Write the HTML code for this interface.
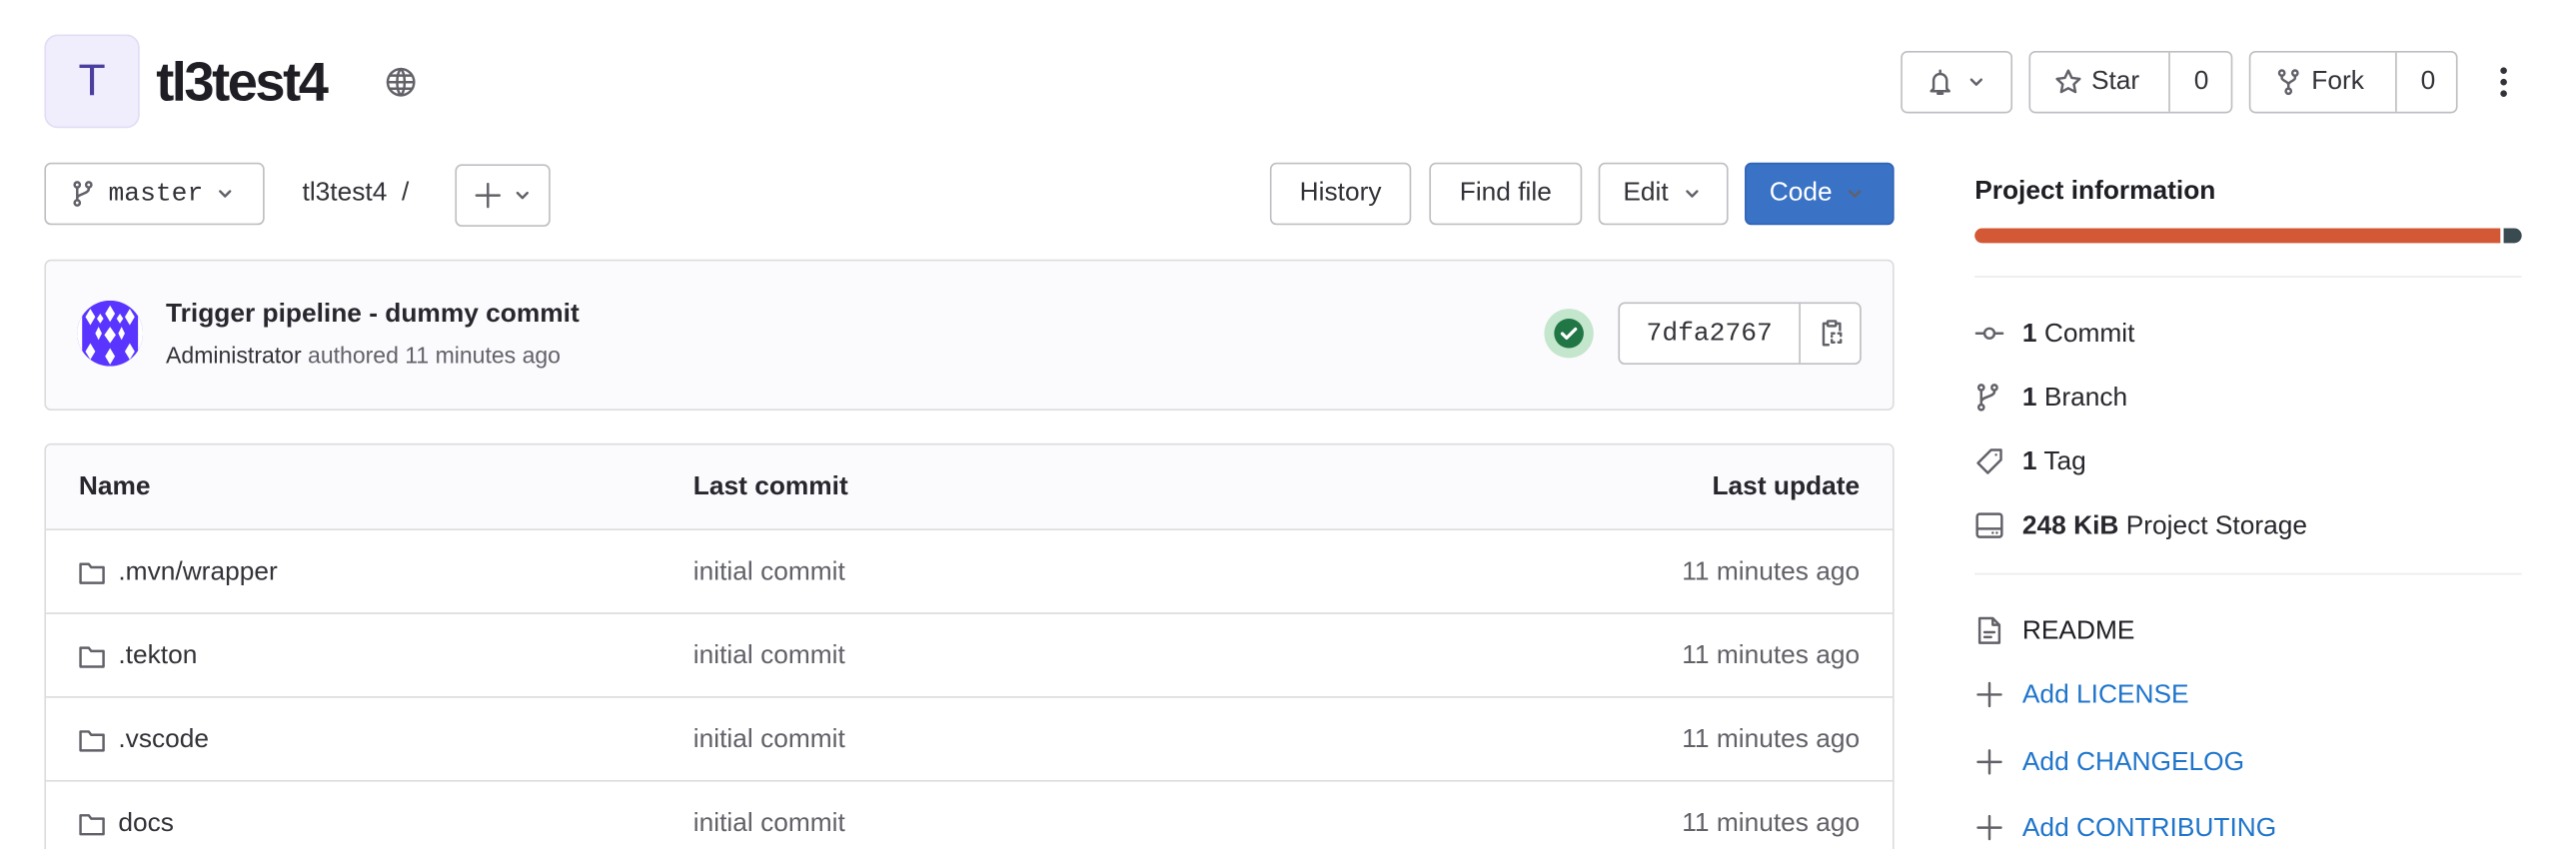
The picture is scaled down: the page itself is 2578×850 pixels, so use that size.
<!DOCTYPE html>
<html><head><meta charset="utf-8">
<style>
html,body{margin:0;padding:0;background:#fff;overflow:hidden;width:2578px;height:850px}
#w{position:absolute;left:0;top:0;width:1568px;height:517px;overflow:hidden;transform:scale(1.6441);transform-origin:0 0;font-family:"Liberation Sans",sans-serif;color:#28272d;font-size:16px}
.a{position:absolute}
.btn{position:absolute;box-sizing:border-box;border:1px solid #bfbfc3;border-radius:4px;background:#fff;height:38px;display:flex;align-items:center;font-size:16px;color:#333238}
svg{display:block}
.ic{fill:none;stroke:#626168;stroke-width:1.5;stroke-linecap:round;stroke-linejoin:round}
.row{position:absolute;left:0;right:0;height:51px;border-top:1px solid #dcdcde;display:flex;align-items:center}
.blue{color:#1f75cb}
</style></head><body><div id="w">
<!-- header -->
<div class="a" style="left:27px;top:21px;width:58px;height:57px;box-sizing:border-box;background:#f0edfd;border:1px solid #e1ddf5;border-radius:8px;color:#4b3f9e;font-size:27px;display:flex;align-items:center;justify-content:center">T</div>
<div class="a" style="left:95px;top:31px;font-size:33px;font-weight:bold;letter-spacing:-1.5px;color:#1f1e24">tl3test4</div>
<svg class="a" style="left:234px;top:40px" width="20" height="20" viewBox="0 0 20 20"><g class="ic" stroke="#737278"><circle cx="10" cy="10" r="8"/><path d="M2 10h16M10 2c-3 3-3 13 0 16M10 2c3 3 3 13 0 16M3.5 6h13M3.5 14h13"/></g></svg>

<div class="btn" style="left:1157px;top:31px;width:68px;padding-left:14px">
<svg width="18" height="18" viewBox="0 0 18 18"><path class="ic" stroke="#333238" d="M9 2v1M5 8a4 4 0 0 1 8 0v5l1.5 1.5h-11L5 13zM7.5 16h3"/></svg>
<svg style="margin-left:7px" width="12" height="12" viewBox="0 0 12 12"><path class="ic" stroke="#333238" d="M3 4.5l3 3 3-3"/></svg></div>
<div class="btn" style="left:1235px;top:31px;width:124px">
<svg style="margin-left:14px" width="18" height="18" viewBox="0 0 18 18"><path class="ic" stroke="#333238" d="M9 2l2.1 4.4 4.8.6-3.5 3.3.9 4.7L9 12.7 4.7 15l.9-4.7L2.1 7l4.8-.6z"/></svg>
<span style="margin-left:5px">Star</span><span style="position:absolute;left:84px;top:0;bottom:0;border-left:1px solid #bfbfc3;width:38px;display:flex;align-items:center;justify-content:center">0</span></div>
<div class="btn" style="left:1369px;top:31px;width:127px">
<svg style="margin-left:14px" width="18" height="18" viewBox="0 0 18 18"><g class="ic" stroke="#333238"><circle cx="5" cy="3.5" r="1.6"/><circle cx="13" cy="3.5" r="1.6"/><circle cx="9" cy="14.5" r="1.6"/><path d="M5 5.1v1.5c0 1.5 4 2 4 4v2.3M13 5.1v1.5c0 1.5-4 2-4 4"/></g></svg>
<span style="margin-left:5px">Fork</span><span style="position:absolute;left:88px;top:0;bottom:0;border-left:1px solid #bfbfc3;width:38px;display:flex;align-items:center;justify-content:center">0</span></div>
<svg class="a" style="left:1519px;top:40px" width="10" height="20" viewBox="0 0 10 20"><g fill="#333238"><circle cx="5" cy="3" r="2"/><circle cx="5" cy="10" r="2"/><circle cx="5" cy="17" r="2"/></g></svg>

<!-- row 2 -->
<div class="btn" style="left:27px;top:99px;width:134px;padding-left:14px">
<svg width="18" height="18" viewBox="0 0 18 18"><g class="ic" stroke="#333238"><circle cx="5" cy="3.5" r="1.6"/><circle cx="12" cy="3.5" r="1.6"/><circle cx="5" cy="14.5" r="1.6"/><path d="M5 5.1v7.8M12 5.1v1c0 3-7 3-7 5.5"/></g></svg>
<span style="margin-left:6px;font-family:'Liberation Mono',monospace;font-size:16px">master</span>
<svg style="margin-left:7px" width="12" height="12" viewBox="0 0 12 12"><path class="ic" stroke="#333238" d="M3 4.5l3 3 3-3"/></svg></div>
<div class="a" style="left:184px;top:109px;color:#333238">tl3test4 &nbsp;/</div>
<div class="btn" style="left:277px;top:100px;width:58px;height:38px;padding-left:10px">
<svg width="18" height="18" viewBox="0 0 18 18"><path class="ic" stroke="#333238" d="M9 2v14M2 9h14"/></svg>
<svg style="margin-left:6px" width="12" height="12" viewBox="0 0 12 12"><path class="ic" stroke="#333238" d="M3 4.5l3 3 3-3"/></svg></div>
<div class="btn" style="left:773px;top:99px;width:86px;justify-content:center">History</div>
<div class="btn" style="left:870px;top:99px;width:93px;justify-content:center">Find file</div>
<div class="btn" style="left:973px;top:99px;width:79px;padding-left:14px">Edit
<svg style="margin-left:8px" width="12" height="12" viewBox="0 0 12 12"><path class="ic" stroke="#333238" d="M3 4.5l3 3 3-3"/></svg></div>
<div class="btn" style="left:1062px;top:99px;width:91px;padding-left:14px;background:#3a72c6;border-color:#2f64b5;color:#fff">Code
<svg style="margin-left:8px" width="12" height="12" viewBox="0 0 12 12"><path class="ic" stroke="#fff" d="M3 4.5l3 3 3-3"/></svg></div>

<!-- commit box -->
<div class="a" style="left:27px;top:158px;width:1126px;height:92px;box-sizing:border-box;background:#fbfafd;border:1px solid #dcdcde;border-radius:4px"></div>
<svg class="a" style="left:47px;top:183px" width="40" height="40" viewBox="0 0 40 40"><defs><clipPath id="c"><circle cx="20" cy="20" r="20"/></clipPath></defs><g clip-path="url(#c)"><rect width="40" height="40" fill="#5a35ff"/><g fill="#fff"><path d="M20 3l3 5-3 5-3-5zM8 5l3 5-3 5-3-5zM32 5l3 5-3 5-3-5zM20 16l3.5 5-3.5 5-3.5-5zM13 16l2 4-2 4-2-4zM27 16l2 4-2 4-2-4zM8 26l3 5-3 5-3-5zM32 26l3 5-3 5-3-5zM20 29l3 5-3 5-3-5zM0 0h3v40H0zM37 0h3v40h-3zM14 8l2 3-2 3-2-3zM26 8l2 3-2 3-2-3z"/></g></g></svg>
<div class="a" style="left:101px;top:183px;font-weight:bold;font-size:16px;color:#28272d">Trigger pipeline - dummy commit</div>
<div class="a" style="left:101px;top:208px;font-size:14px;color:#626168"><span style="color:#333238">Administrator</span> authored 11 minutes ago</div>
<div class="a" style="left:940px;top:188px;width:30px;height:30px;border-radius:50%;background:#c3e6cd"></div>
<svg class="a" style="left:945px;top:193px" width="20" height="20" viewBox="0 0 20 20"><circle cx="10" cy="10" r="9" fill="#217645"/><path d="M6 10.2l2.6 2.6L14 7.4" fill="none" stroke="#fff" stroke-width="2" stroke-linecap="round" stroke-linejoin="round"/></svg>
<div class="btn" style="left:985px;top:184px;width:148px;height:38px">
<span style="width:109px;text-align:center;font-family:'Liberation Mono',monospace;font-size:16px">7dfa2767</span>
<span style="position:absolute;left:109px;top:0;bottom:0;border-left:1px solid #bfbfc3;width:38px;display:flex;align-items:center;justify-content:center">
<svg width="18" height="18" viewBox="0 0 18 18"><g class="ic" stroke="#333238"><path d="M6 3H4v13h3M12 3h2v4"/><rect x="6.5" y="1.5" width="5" height="3" rx=".5"/><path d="M9 9h1.5M13 9h1.5v1.5M14.5 13v1.5H13M10.5 14.5H9V13M9 10.5V11" /></g></svg></span></div>

<!-- table -->
<div class="a" style="left:27px;top:270px;width:1126px;height:300px;box-sizing:border-box;border:1px solid #dcdcde;border-radius:4px;overflow:hidden">
<div class="a" style="left:0;right:0;top:0;height:51px;background:#fbfafd;font-weight:bold;display:flex;align-items:center">
<span class="a" style="left:20px">Name</span><span class="a" style="left:394px">Last commit</span><span class="a" style="right:20px">Last update</span></div>
<div class="row" style="top:51px"><svg class="a" style="left:19px" width="18" height="18" viewBox="0 0 18 18"><path class="ic" stroke="#737278" d="M2 3.5h5l1.5 2H16v9.5H2z"/></svg><span class="a" style="left:44px;color:#333238">.mvn/wrapper</span><span class="a" style="left:394px;color:#626168">initial commit</span><span class="a" style="right:20px;color:#626168">11 minutes ago</span></div>
<div class="row" style="top:102px"><svg class="a" style="left:19px" width="18" height="18" viewBox="0 0 18 18"><path class="ic" stroke="#737278" d="M2 3.5h5l1.5 2H16v9.5H2z"/></svg><span class="a" style="left:44px;color:#333238">.tekton</span><span class="a" style="left:394px;color:#626168">initial commit</span><span class="a" style="right:20px;color:#626168">11 minutes ago</span></div>
<div class="row" style="top:153px"><svg class="a" style="left:19px" width="18" height="18" viewBox="0 0 18 18"><path class="ic" stroke="#737278" d="M2 3.5h5l1.5 2H16v9.5H2z"/></svg><span class="a" style="left:44px;color:#333238">.vscode</span><span class="a" style="left:394px;color:#626168">initial commit</span><span class="a" style="right:20px;color:#626168">11 minutes ago</span></div>
<div class="row" style="top:204px"><svg class="a" style="left:19px" width="18" height="18" viewBox="0 0 18 18"><path class="ic" stroke="#737278" d="M2 3.5h5l1.5 2H16v9.5H2z"/></svg><span class="a" style="left:44px;color:#333238">docs</span><span class="a" style="left:394px;color:#626168">initial commit</span><span class="a" style="right:20px;color:#626168">11 minutes ago</span></div>
</div>

<!-- sidebar -->
<div class="a" style="left:1202px;top:108px;font-weight:bold;color:#1f1e24">Project information</div>
<div class="a" style="left:1202px;top:139px;width:320px;height:9px;background:#d35836;border-radius:5px 0 0 5px"></div>
<div class="a" style="left:1524px;top:139px;width:11px;height:9px;background:#3a4a51;border-radius:0 5px 5px 0"></div>
<div class="a" style="left:1202px;top:168px;width:333px;height:1px;background:#ececef"></div>
<svg class="a" style="left:1202px;top:195px" width="18" height="16" viewBox="0 0 18 16"><g class="ic" stroke="#737278"><circle cx="9" cy="8" r="3"/><path d="M1 8h5M12 8h5"/></g></svg>
<div class="a" style="left:1231px;top:195px"><b>1</b> Commit</div>
<svg class="a" style="left:1202px;top:233px" width="18" height="18" viewBox="0 0 18 18"><g class="ic" stroke="#737278"><circle cx="4" cy="3" r="1.6"/><circle cx="12" cy="3" r="1.6"/><circle cx="4" cy="15" r="1.6"/><path d="M4 4.6v8.8M12 4.6v1c0 3-8 3-8 6"/></g></svg>
<div class="a" style="left:1231px;top:234px"><b>1</b> Branch</div>
<svg class="a" style="left:1202px;top:272px" width="18" height="18" viewBox="0 0 18 18"><path class="ic" stroke="#737278" d="M10 2h6v6l-8 8-6-6zM13 5h.01"/></svg>
<div class="a" style="left:1231px;top:273px"><b>1</b> Tag</div>
<svg class="a" style="left:1202px;top:311px" width="18" height="18" viewBox="0 0 18 18"><g class="ic" stroke="#737278"><rect x="1.5" y="2" width="15" height="14" rx="1.5"/><path d="M1.5 11h15M11 13.5h.01M13.5 13.5h.01"/></g></svg>
<div class="a" style="left:1231px;top:312px"><b>248 KiB</b> Project Storage</div>
<div class="a" style="left:1202px;top:349px;width:333px;height:1px;background:#ececef"></div>
<svg class="a" style="left:1203px;top:375px" width="16" height="18" viewBox="0 0 16 18"><path class="ic" stroke="#737278" d="M2 1.5h8l4 4v11H2zM10 1.5v4h4M5 10h6M5 13h4"/></svg>
<div class="a" style="left:1231px;top:376px;color:#1f1e24">README</div>
<svg class="a" style="left:1203px;top:415px" width="16" height="16" viewBox="0 0 16 16"><path class="ic" stroke="#1f75cb" d="M8 1v14M1 8h14"/></svg>
<div class="a blue" style="left:1231px;top:415px">Add LICENSE</div>
<svg class="a" style="left:1203px;top:456px" width="16" height="16" viewBox="0 0 16 16"><path class="ic" stroke="#1f75cb" d="M8 1v14M1 8h14"/></svg>
<div class="a blue" style="left:1231px;top:456px">Add CHANGELOG</div>
<svg class="a" style="left:1203px;top:496px" width="16" height="16" viewBox="0 0 16 16"><path class="ic" stroke="#1f75cb" d="M8 1v14M1 8h14"/></svg>
<div class="a blue" style="left:1231px;top:496px">Add CONTRIBUTING</div>
</div></body></html>
